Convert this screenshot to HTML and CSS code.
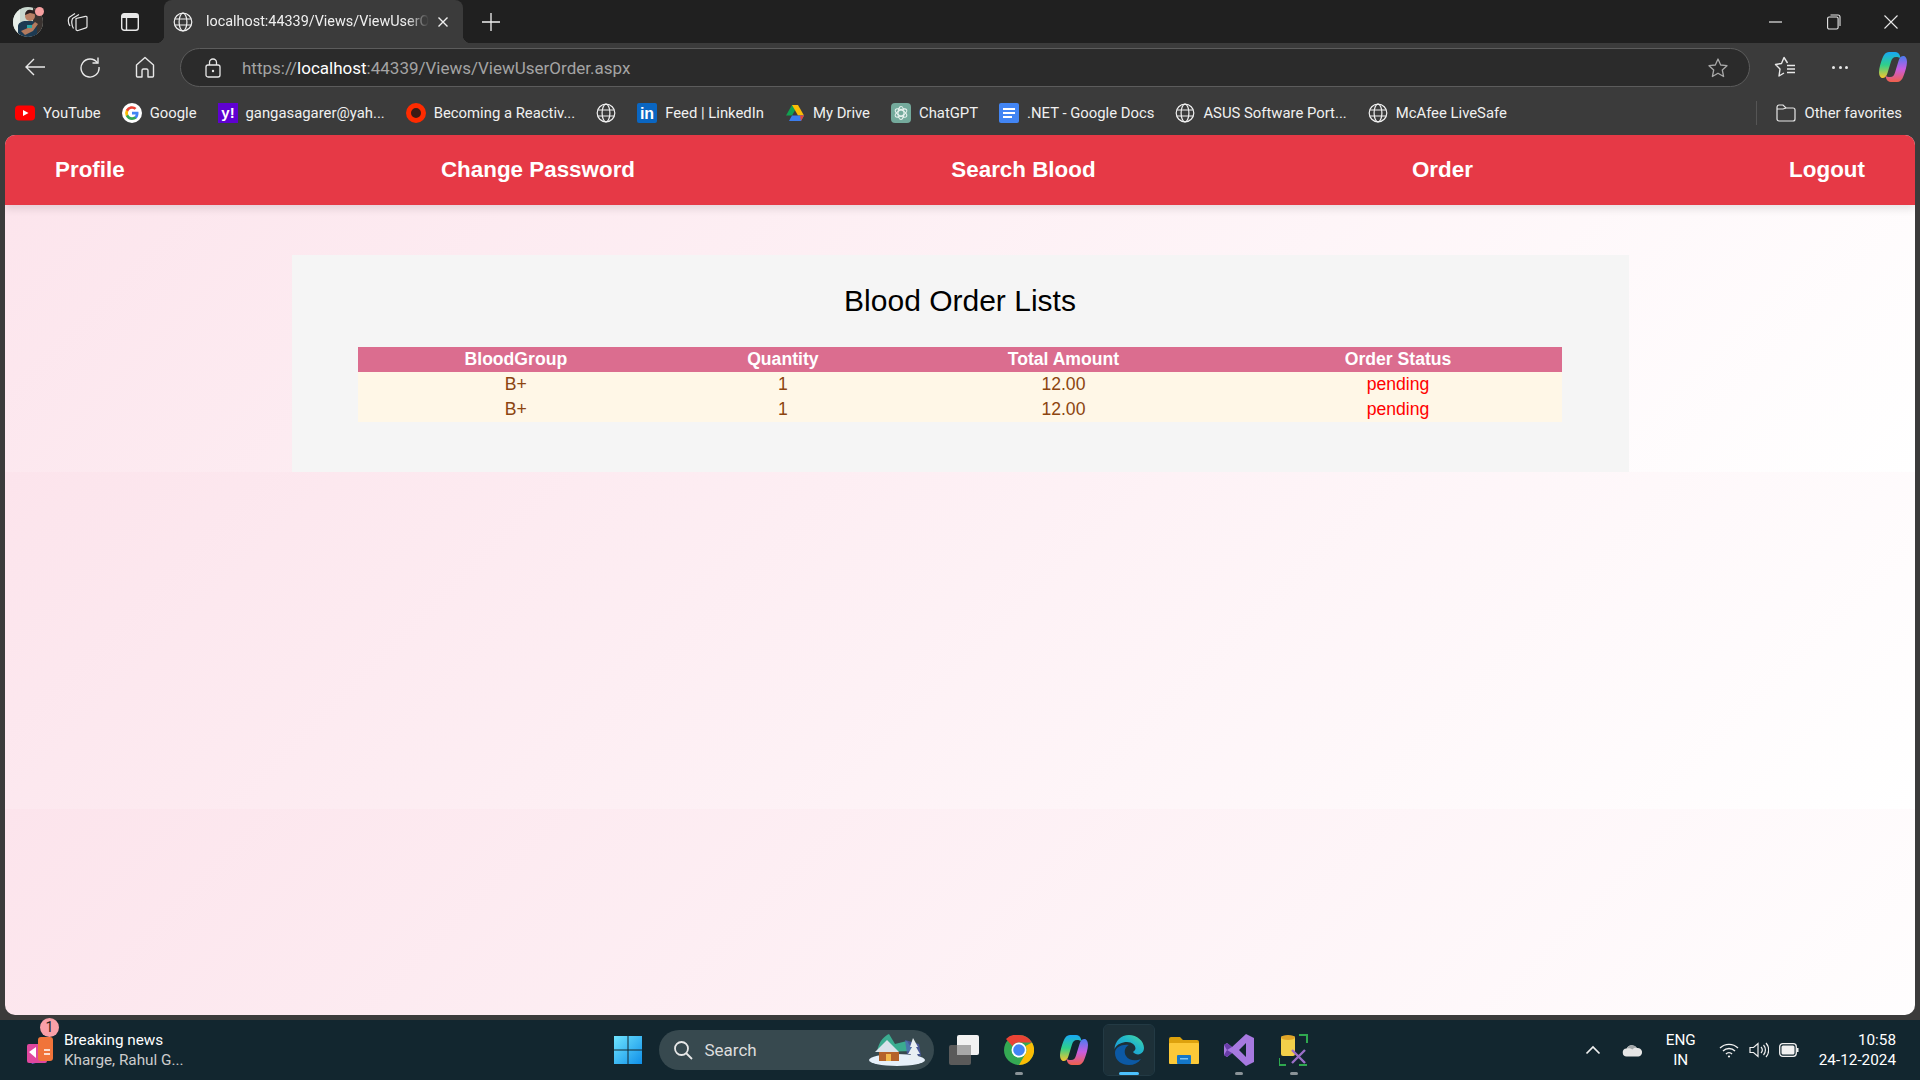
FILE: index.html
```html
<!DOCTYPE html>
<html lang="en">
<head>
    <meta charset="UTF-8">
    <meta name="viewport" content="width=device-width, initial-scale=1.0">
    <title>Blood Order Lists</title>
    <link rel="stylesheet" href="styles.css">
</head>
<body>
    <svg class="defs" width="0" height="0">
        <symbol id="globe" viewBox="0 0 20 20">
            <g fill="none" stroke="#f0f0f0" stroke-width="1.2">
                <circle cx="10" cy="10" r="8.8"/>
                <ellipse cx="10" cy="10" rx="3.9" ry="8.8"/>
                <path d="M1.8 7h16.4M1.8 13h16.4"/>
            </g>
        </symbol>
        <linearGradient id="copA" x1="0" y1="0" x2="0" y2="1">
            <stop offset="0" stop-color="#18a8f5"/>
            <stop offset=".5" stop-color="#2fd08a"/>
            <stop offset="1" stop-color="#f8c52c"/>
        </linearGradient>
        <linearGradient id="copB" x1="0" y1="0" x2="0" y2="1">
            <stop offset="0" stop-color="#4a7cf0"/>
            <stop offset=".5" stop-color="#c85ce0"/>
            <stop offset="1" stop-color="#f0604a"/>
        </linearGradient>
        <linearGradient id="edgeA" x1="0" y1="1" x2="1" y2="0">
            <stop offset="0" stop-color="#1b8fdc"/>
            <stop offset=".6" stop-color="#22b8c8"/>
            <stop offset="1" stop-color="#4bdc9a"/>
        </linearGradient>
        <symbol id="copilot" viewBox="0 0 28 32">
            <path d="M10 1h6c2.500 0 4 1.500 4.800 3.500l1 3C20.500 6.500 19 6 17 6c-3 0-4 1.500-5 4.500L8.500 22c-1 3.500-2.500 5-5 5C1.500 27 0 24.500 0 21c0-4 2-10 3.500-14C5 3 7 1 10 1z" fill="url(#copA)"/>
            <path d="M18 31h-6c-2.500 0-4-1.500-4.800-3.500l-1-3c1.300 1 2.800 1.500 4.800 1.500 3 0 4-1.500 5-4.500L19.500 10c1-3.500 2.500-5 5-5C26.500 5 28 7.500 28 11c0 4-2 10-3.500 14C23 29 21 31 18 31z" fill="url(#copB)"/>
        </symbol>
    </svg>

    <header class="titlebar">
        <svg class="avatar" viewBox="0 0 30 30" width="30" height="30">
            <clipPath id="avatarClip"><circle cx="15" cy="15" r="15"/></clipPath>
            <g clip-path="url(#avatarClip)">
                <rect width="30" height="30" fill="#c9d8cf"/>
                <rect x="20" width="10" height="30" fill="#3a3330"/>
                <rect width="7" height="30" fill="#e8efe9"/>
                <path d="M5 30V19c0-3 4-5 8-5h6c3 0 5 4 5 8v8z" fill="#1d3a52"/>
                <circle cx="17" cy="9" r="5" fill="#b98064"/>
                <path d="M12 8c0-4 3-6 6-5 3 0 4 2 4 4l-5-1z" fill="#2a2020"/>
                <path d="M8 24l9-4 5-5 3 2-5 7-8 4z" fill="#b27a5e"/>
                <rect x="14" y="18" width="5" height="3" fill="#2aa5a5"/>
            </g>
        </svg>
        <span class="avatar-dot"></span>
        <svg class="icon collections" viewBox="0 0 21 20" width="21" height="20">
            <g fill="none" stroke="#e8e8e8" stroke-width="1.200" stroke-linejoin="round">
                <path d="M3 14C1 11 1 8 2 5.500L8 1.500"/>
                <path d="M6.500 16.500C4.500 13 4.500 9 5.500 6.500L12 2.500"/>
                <path d="M9 6.500l9.500-2.200c1-.2 1.500.3 1.500 1v9.200c0 .7-.4 1.200-1 1.400L11 18.500c-1 .3-2-.3-2-1.300z"/>
            </g>
        </svg>
        <svg class="icon panel" viewBox="0 0 18 18" width="18" height="18">
            <rect x=".7" y=".7" width="16.600" height="16.600" rx="2.500" fill="none" stroke="#e8e8e8" stroke-width="1.400"/>
            <path d="M1 1h16v4H1z" fill="#e8e8e8"/>
            <path d="M5.500 5v12.500" stroke="#e8e8e8" stroke-width="1.400"/>
        </svg>
        <div class="tab">
            <svg class="icon" width="20" height="20"><use href="#globe"/></svg>
            <span class="tab-title">localhost:44339/Views/ViewUserOrder.aspx</span>
            <svg class="icon" viewBox="0 0 14 14" width="14" height="14">
                <path d="M2.500 2.500l9 9M11.500 2.500l-9 9" stroke="#f0f0f0" stroke-width="1.400"/>
            </svg>
        </div>
        <svg class="icon newtab" viewBox="0 0 18 18" width="18" height="18">
            <path d="M9 0v18M0 9h18" stroke="#f0f0f0" stroke-width="1.300"/>
        </svg>
        <div class="window-controls">
            <button class="win-btn"><svg viewBox="0 0 14 14" width="14" height="14"><path d="M0 7h13" stroke="#e8e8e8" stroke-width="1.200"/></svg></button>
            <button class="win-btn">
                <svg viewBox="0 0 14 16" width="14" height="16" fill="none" stroke="#e8e8e8" stroke-width="1.100">
                    <rect x=".6" y="3" width="10.500" height="12" rx="1.500"/>
                    <path d="M3.500 1h7.500c1.200 0 2 .8 2 2v9"/>
                </svg>
            </button>
            <button class="win-btn"><svg viewBox="0 0 14 14" width="14" height="14"><path d="M.5.500l13 13M13.500.500l-13 13" stroke="#e8e8e8" stroke-width="1.100"/></svg></button>
        </div>
    </header>

    <div class="toolbar">
        <button class="tool-btn">
            <svg viewBox="0 0 22 20" width="22" height="20" fill="none" stroke="#e8e8e8" stroke-width="1.400">
                <path d="M21 10H2M10 2l-8 8 8 8"/>
            </svg>
        </button>
        <button class="tool-btn">
            <svg viewBox="0 0 22 22" width="22" height="22" fill="none" stroke="#e8e8e8" stroke-width="1.400">
                <path d="M18.500 7A9 9 0 1 0 20 11"/>
                <path d="M19 1.500V7h-5.500"/>
            </svg>
        </button>
        <button class="tool-btn">
            <svg viewBox="0 0 20 22" width="20" height="22" fill="none" stroke="#e8e8e8" stroke-width="1.400" stroke-linejoin="round">
                <path d="M10 1.500L1.500 9v11a1 1 0 0 0 1 1H7v-6.500c0-1 .8-1.500 1.500-1.500h3c.7 0 1.500.5 1.500 1.500V21h4.500a1 1 0 0 0 1-1V9z"/>
            </svg>
        </button>
        <div class="address">
            <svg class="icon lock" viewBox="0 0 16 20" width="16" height="20" fill="none" stroke="#e8e8e8" stroke-width="1.300">
                <rect x="1" y="7" width="14" height="12" rx="2"/>
                <path d="M4.500 7V4.500a3.500 3.500 0 0 1 7 0V7"/>
                <circle cx="8" cy="13" r="1.200" fill="#e8e8e8" stroke="none"/>
            </svg>
            <span class="url">https://<b class="url-host">localhost</b>:44339/Views/ViewUserOrder.aspx</span>
            <svg class="icon star" viewBox="0 0 22 22" width="22" height="22">
                <path d="M11 2l2.700 6 6.300.7-4.700 4.300 1.300 6.500L11 16.200 5.400 19.500 6.700 13 2 8.700 8.300 8z" fill="none" stroke="#a8a8a8" stroke-width="1.300" stroke-linejoin="round"/>
            </svg>
        </div>
        <button class="tool-btn">
            <svg viewBox="0 0 22 22" width="22" height="22" fill="none" stroke="#e8e8e8" stroke-width="1.400" stroke-linejoin="round">
                <path d="M13.500 7L10 1.500 7.500 7.500 1.500 8.500 6 13 5 20l5-3"/>
                <path d="M13 9.500h8M13 13h8M13 16.500h8"/>
            </svg>
        </button>
        <button class="tool-btn">
            <span class="dots"><i></i><i></i><i></i></span>
        </button>
        <svg class="copilot-top" width="28" height="32"><use href="#copilot"/></svg>
    </div>

    <div class="bookmarks">
        <a class="bm">
            <svg viewBox="0 0 20 20" width="20" height="20">
                <rect y="2.500" width="20" height="15" rx="4" fill="#f00"/>
                <path d="M8 7l5.500 3L8 13z" fill="#fff"/>
            </svg>
            YouTube
        </a>
        <a class="bm">
            <svg viewBox="0 0 20 20" width="20" height="20">
                <circle cx="10" cy="10" r="10" fill="#fff"/>
                <path d="M16.500 10.200c0-.5 0-1-.1-1.500H10v2.900h3.700a3.200 3.200 0 0 1-1.400 2.100v1.700h2.200c1.300-1.200 2-3 2-5.200z" fill="#4285f4"/>
                <path d="M10 17c1.900 0 3.400-.6 4.500-1.700l-2.200-1.700c-.6.400-1.400.7-2.300.7-1.800 0-3.300-1.200-3.800-2.800H3.900v1.800A7 7 0 0 0 10 17z" fill="#34a853"/>
                <path d="M6.200 11.500a4.200 4.200 0 0 1 0-2.900V6.800H3.900a7 7 0 0 0 0 6.400z" fill="#fbbc05"/>
                <path d="M10 5.800c1 0 1.900.4 2.600 1l1.900-1.900A7 7 0 0 0 3.900 6.800l2.300 1.800C6.700 7 8.200 5.800 10 5.800z" fill="#ea4335"/>
            </svg>
            Google
        </a>
        <a class="bm">
            <svg viewBox="0 0 20 20" width="20" height="20">
                <rect width="20" height="20" fill="#5f01d1"/>
                <text x="10" y="15" class="yahoo-mark">y!</text>
            </svg>
            gangasagarer@yah...
        </a>
        <a class="bm">
            <svg viewBox="0 0 20 20" width="20" height="20">
                <circle cx="10" cy="10" r="7.500" fill="#3b1a14" stroke="#ff2b00" stroke-width="5"/>
            </svg>
            Becoming a Reactiv...
        </a>
        <a class="bm"><svg width="20" height="20"><use href="#globe"/></svg></a>
        <a class="bm">
            <svg viewBox="0 0 20 20" width="20" height="20">
                <rect width="20" height="20" rx="2" fill="#0a66c2"/>
                <text x="10" y="16" class="linkedin-mark">in</text>
            </svg>
            Feed | LinkedIn
        </a>
        <a class="bm">
            <svg viewBox="0 0 20 20" width="20" height="20">
                <path d="M7 2h6l-6 10.500H1z" fill="#12a150"/>
                <path d="M13 2l6 10.500h-6L7 2z" fill="#fbbc04"/>
                <path d="M4 18l3-5.500h12L16 18z" fill="#3b7ded"/>
                <path d="M16 18l3-5.500h-4z" fill="#ea4335"/>
            </svg>
            My Drive
        </a>
        <a class="bm">
            <svg viewBox="0 0 20 20" width="20" height="20">
                <rect width="20" height="20" rx="4" fill="#74aa9c"/>
                <g fill="none" stroke="#e8f2ef" stroke-width="1.100">
                    <ellipse cx="10" cy="10" rx="3" ry="6.500"/>
                    <ellipse cx="10" cy="10" rx="3" ry="6.500" transform="rotate(60 10 10)"/>
                    <ellipse cx="10" cy="10" rx="3" ry="6.500" transform="rotate(120 10 10)"/>
                </g>
            </svg>
            ChatGPT
        </a>
        <a class="bm">
            <svg viewBox="0 0 20 20" width="20" height="20">
                <rect width="20" height="20" rx="2" fill="#4285f4"/>
                <path d="M4 5h12v2H4zM4 9h12v2H4zM4 13h9v2H4z" fill="#fff"/>
            </svg>
            .NET - Google Docs
        </a>
        <a class="bm"><svg width="20" height="20"><use href="#globe"/></svg>ASUS Software Port...</a>
        <a class="bm"><svg width="20" height="20"><use href="#globe"/></svg>McAfee LiveSafe</a>
        <a class="bm bm-other">
            <svg viewBox="0 0 20 18" width="20" height="18" fill="none" stroke="#e8e8e8" stroke-width="1.200">
                <path d="M1 3.500C1 2 2 1 3 1h4l3 3h7c1.200 0 2 1 2 2v9c0 1.200-.8 2-2 2H3c-1.200 0-2-.8-2-2z"/>
                <path d="M1 5h6l3-1"/>
            </svg>
            Other favorites
        </a>
    </div>

    <div class="viewport">
        <nav class="navbar">
            <a href="#">Profile</a>
            <a href="#">Change Password</a>
            <a href="#">Search Blood</a>
            <a href="#">Order</a>
            <a href="#">Logout</a>
        </nav>
        <div class="container">
            <h2>Blood Order Lists</h2>
            <table class="grid">
                <thead>
                    <tr>
                        <th>BloodGroup</th>
                        <th>Quantity</th>
                        <th>Total Amount</th>
                        <th>Order Status</th>
                    </tr>
                </thead>
                <tbody>
                    <tr>
                        <td>B+</td>
                        <td>1</td>
                        <td>12.00</td>
                        <td class="pending">pending</td>
                    </tr>
                    <tr>
                        <td>B+</td>
                        <td>1</td>
                        <td>12.00</td>
                        <td class="pending">pending</td>
                    </tr>
                </tbody>
            </table>
        </div>
    </div>

    <footer class="taskbar">
        <div class="news">
            <svg viewBox="0 0 29 30" width="29" height="30">
                <path d="M3 22l19 3-15 4z" fill="#7a4fd0"/>
                <rect x="2" y="9" width="20" height="19" rx="2" fill="#e0479e"/>
                <rect x="13" y="2" width="15" height="24" rx="3" fill="#f0743a"/>
                <path d="M4 17l7-5v11z" fill="#fff"/>
                <path d="M19 15h6M19 19h6" stroke="#fff" stroke-width="1.500"/>
            </svg>
            <span class="news-badge">1</span>
            <div class="news-text">
                <span class="news-title">Breaking news</span>
                <span class="news-sub">Kharge, Rahul G...</span>
            </div>
        </div>

        <div class="tasks">
            <div class="task">
                <svg viewBox="0 0 30 30" width="30" height="30">
                    <defs>
                        <linearGradient id="winG" x1="0" y1="0" x2="1" y2="1">
                            <stop offset="0" stop-color="#6fe4ff"/>
                            <stop offset="1" stop-color="#0f8fe8"/>
                        </linearGradient>
                    </defs>
                    <path d="M1 1h13.500v13.500H1zM15.500 1H29v13.500H15.500zM1 15.500h13.500V29H1zM15.500 15.500H29V29H15.500z" fill="url(#winG)"/>
                </svg>
            </div>
            <div class="searchbox">
                <svg viewBox="0 0 20 20" width="20" height="20" fill="none" stroke="#e8e8e8" stroke-width="1.800">
                    <circle cx="8.500" cy="8.500" r="6.500"/>
                    <path d="M13 13l6 6"/>
                </svg>
                <span>Search</span>
                <svg class="scene" viewBox="0 0 56 32" width="56" height="32">
                    <ellipse cx="28" cy="26" rx="28" ry="6" fill="#e6f0fa"/>
                    <path d="M8 18C10 6 16 2 20 0l6 10 12-3 6 10z" fill="#3cc6a0" opacity=".8"/>
                    <path d="M36 6l14 4 2 12-14-2z" fill="#5060b8" opacity=".7"/>
                    <path d="M6 18L18 6l12 12z" fill="#d8e2ea"/>
                    <rect x="10" y="18" width="20" height="9" fill="#b5622a"/>
                    <rect x="17" y="20" width="5" height="7" fill="#f2b84a"/>
                    <path d="M44 4l5 9h-2l4 7h-3l3 6H39l3-6h-3l4-7h-2z" fill="#e8eef2"/>
                </svg>
            </div>
            <div class="task">
                <svg viewBox="0 0 30 30" width="30" height="30">
                    <rect x="0" y="10" width="22" height="20" rx="2" fill="#5a5a5a"/>
                    <rect x="8" y="0" width="22" height="20" rx="2" fill="#f2f2f2"/>
                    <rect x="8" y="10" width="14" height="10" fill="#a8a8a8"/>
                </svg>
            </div>
            <div class="task task-open">
                <svg viewBox="0 0 30 30" width="30" height="30">
                    <circle cx="15" cy="15" r="15" fill="#34a853"/>
                    <path d="M15 0a15 15 0 0 1 13 7.500H15a7.500 7.500 0 0 0-6.500 3.750L2 3.900A15 15 0 0 1 15 0z" fill="#ea4335"/>
                    <path d="M28 7.500A15 15 0 0 1 15 30l6.500-11.250A7.500 7.500 0 0 0 21.500 11z" fill="#fbbc05"/>
                    <circle cx="15" cy="15" r="7.500" fill="#fff"/>
                    <circle cx="15" cy="15" r="5.800" fill="#4285f4"/>
                </svg>
            </div>
            <div class="task"><svg width="28" height="32"><use href="#copilot"/></svg></div>
            <div class="task task-active">
                <svg viewBox="0 0 30 30" width="30" height="30">
                    <path d="M1 18C1 26 8 30 15 30 20 30 24 28 27 24 22 26 15 26 12 21 9 16 12 11 15 10 8 9 1 12 1 18z" fill="#0c59a4"/>
                    <path d="M15 0C7 0 1 6 .5 14 3 9 8 7 13 7c5 0 8.500 3 8.500 6.500 0 1.500-1.500 2.500-2.500 3.500 1.500 2 5 3 7 2 2.500-1 4-3 4-6C30 6 23 0 15 0z" fill="url(#edgeA)"/>
                </svg>
            </div>
            <div class="task">
                <svg viewBox="0 0 30 28" width="30" height="28">
                    <path d="M0 3a2 2 0 0 1 2-2h9l3 3h14a2 2 0 0 1 2 2v4H0z" fill="#dda20d"/>
                    <rect y="7" width="30" height="21" rx="1" fill="#fcc938"/>
                    <rect x="8" y="19" width="14" height="9" rx="1" fill="#1477c9"/>
                    <rect x="11" y="22" width="8" height="1.500" fill="#7fc4f2"/>
                </svg>
            </div>
            <div class="task task-open">
                <svg viewBox="0 0 30 32" width="30" height="32">
                    <path d="M22 0l8 4v24l-8 4L8 19l-5 4-3-2V11l3-2 5 4zM22 9l-7 7 7 7z" fill="#a779e0"/>
                    <path d="M0 11l3-2 5 4-5 3zM0 21l3 2 5-4-5-3z" fill="#6a3eaa"/>
                </svg>
            </div>
            <div class="task task-open">
                <svg viewBox="0 0 30 32" width="30" height="32">
                    <rect x="2" y="2" width="14" height="20" rx="2" fill="#f2d04a"/>
                    <ellipse cx="9" cy="3.500" rx="7" ry="2.500" fill="#e0a528"/>
                    <path d="M20 1h8v8M0 24v7h7M20 31h8" fill="none" stroke="#2fa84f" stroke-width="2"/>
                    <path d="M13 29l13-13M13 16l13 13" stroke="#9b6fc8" stroke-width="2.400"/>
                </svg>
            </div>
        </div>

        <div class="tray">
            <svg viewBox="0 0 16 10" width="16" height="10" fill="none" stroke="#f0f0f0" stroke-width="1.700">
                <path d="M1.500 8.500L8 2l6.500 6.500"/>
            </svg>
            <svg class="tray-cloud" viewBox="0 0 21 13" width="21" height="13">
                <path d="M5 12.500a4 4 0 0 1-.5-8A6 6 0 0 1 15 4a4.300 4.300 0 0 1 1.500 8.500z" fill="#e6e6e6"/>
                <path d="M4.500 4.500A6 6 0 0 1 15 4c-2-.5-3.500 0-4.500 1.500-2-1.500-4-1.500-6-1z" fill="#a4a8aa"/>
            </svg>
            <div class="lang"><span>ENG</span><span>IN</span></div>
            <svg class="tray-icon" viewBox="0 0 20 16" width="20" height="16" fill="none" stroke="#f0f0f0" stroke-width="1.400">
                <path d="M1 6a13 13 0 0 1 18 0M4 9a8.500 8.500 0 0 1 12 0M7 12a4 4 0 0 1 6 0"/>
                <circle cx="10" cy="14.500" r="1.100" fill="#f0f0f0" stroke="none"/>
            </svg>
            <svg class="tray-icon" viewBox="0 0 20 16" width="20" height="16" fill="none" stroke="#f0f0f0" stroke-width="1.200">
                <path d="M1 5.500h3.500L9 1.500v13l-4.500-4H1z"/>
                <path d="M12 5a4.500 4.500 0 0 1 0 6M14.500 3a7.500 7.500 0 0 1 0 10M17 1a10.500 10.500 0 0 1 0 14"/>
            </svg>
            <svg viewBox="0 0 20 14" width="20" height="14">
                <rect x=".7" y=".7" width="16.600" height="12.600" rx="3" fill="none" stroke="#f0f0f0" stroke-width="1.300"/>
                <rect x="2.500" y="2.500" width="13" height="9" rx="1.500" fill="#f0f0f0"/>
                <rect x="18" y="5" width="1.500" height="4" fill="#f0f0f0"/>
            </svg>
            <div class="clock"><span>10:58</span><span>24-12-2024</span></div>
        </div>
    </footer>
</body>
</html>
```

FILE: styles.css
```css
* { box-sizing: border-box; }
html, body { height: 100%; }
body { margin: 0; display: flex; flex-direction: column; height: 1080px; overflow: hidden; background-color: #3b3b3b; font-family: "Liberation Sans", Arial, sans-serif; }
svg { display: block; flex: none; }
button { background: none; border: none; padding: 0; display: flex; align-items: center; justify-content: center; }
.defs { position: absolute; }

/* browser chrome */
.titlebar { position: relative; display: flex; align-items: center; height: 43px; flex: none; padding-left: 13px; background-color: #202020; }
.avatar-dot { position: absolute; left: 35px; top: 7px; width: 9px; height: 9px; border-radius: 50%; background-color: #f6a0a0; }
.collections { margin-left: 24px; }
.panel { margin-left: 33px; }
.tab { position: relative; display: flex; align-items: center; align-self: stretch; width: 299px; margin-left: 25px; margin-top: 0; padding-left: 9px; border-radius: 8px 8px 0 0; background-color: #3b3b3b; }
.tab::before, .tab::after { content: ""; position: absolute; bottom: 0; width: 8px; height: 8px; }
.tab::before { left: -8px; background: radial-gradient(circle at 0 0, #202020 8px, #3b3b3b 8.5px); }
.tab::after { right: -8px; background: radial-gradient(circle at 100% 0, #202020 8px, #3b3b3b 8.5px); }
.tab-title { width: 223px; margin: 0 7px 0 13px; white-space: nowrap; overflow: hidden; font: 14.4px Roboto, sans-serif; color: #f0f0f0; -webkit-mask-image: linear-gradient(to right, #000 90%, transparent); mask-image: linear-gradient(to right, #000 90%, transparent); }
.newtab { margin-left: 19px; }
.window-controls { display: flex; margin-left: auto; }
.win-btn { width: 57.5px; height: 43px; }

.toolbar { display: flex; align-items: center; gap: 15px; height: 48px; flex: none; padding: 0 13px 0 15px; background-color: #3b3b3b; }
.tool-btn { width: 40px; height: 38px; }
.address { display: flex; align-items: center; flex: 1; height: 39px; margin-top: 1px; padding: 0 20px 0 24px; border: 1.500px solid #5c5c5c; border-radius: 20px; background-color: #2b2b2b; }
.url { margin-left: 21px; font: 17px Roboto, sans-serif; color: #a4a4a4; white-space: nowrap; }
.url-host { font-weight: 400; color: #fff; }
.star { margin-left: auto; }
.dots { display: flex; gap: 3.500px; }
.dots i { width: 3px; height: 3px; border-radius: 50%; background-color: #e8e8e8; }
.copilot-top { margin-left: 4px; }

.bookmarks { display: flex; align-items: center; gap: 21px; height: 44px; flex: none; padding: 0 18px 0 15px; background-color: #3b3b3b; }
.bm { display: flex; align-items: center; gap: 8px; font: 14.85px Roboto, sans-serif; color: #f0f0f0; white-space: nowrap; }
.bm-other { margin-left: auto; padding-left: 19px; height: 24px; border-left: 1px solid #555; }
.yahoo-mark { font: bold 15px "Liberation Sans", sans-serif; fill: #fff; text-anchor: middle; }
.linkedin-mark { font: bold 16px "Liberation Sans", sans-serif; fill: #fff; text-anchor: middle; }

/* the page itself */
.viewport { flex: none; height: 880px; margin: 0 5px; border-radius: 10px; overflow: hidden; background: linear-gradient(135deg, #fce4ec, #fff); background-size: 100% 337px; }
.navbar { display: flex; justify-content: space-between; align-items: center; height: 70px; padding: 0 50px; background-color: #e63946; box-shadow: 0 4px 8px rgba(0,0,0,0.1); }
.navbar a { font-size: 22.4px; font-weight: bold; color: #fff; text-decoration: none; }
.container { width: 70%; height: 217px; margin: 50px auto 0; padding-top: 29px; background-color: #f5f5f5; }
.container h2 { margin: 0 0 29px; font-size: 30px; font-weight: normal; line-height: 34px; text-align: center; color: #000; }
.grid { width: 90%; margin: 0 auto; border-collapse: collapse; font-size: 17.6px; }
.grid th { height: 25px; padding: 0; background-color: #db6d8f; color: #fff; font-weight: bold; }
.grid td { height: 25px; padding: 0; background-color: #fff7e7; color: #8c4510; text-align: center; }
.grid td.pending { color: #f00; }

/* windows taskbar */
.taskbar { display: grid; grid-template-columns: 1fr auto 1fr; align-items: center; height: 60px; flex: none; margin-top: 5px; background-color: #12262f; color: #fff; font-family: Roboto, sans-serif; }
.news { position: relative; display: flex; align-items: center; padding-left: 25px; }
.news-badge { position: absolute; left: 40px; top: -12px; width: 19px; height: 19px; border-radius: 50%; background-color: #f9a0a8; color: #222; font-size: 14px; line-height: 19px; text-align: center; }
.news-text { display: flex; flex-direction: column; margin-left: 10px; font-size: 15.3px; line-height: 20px; }
.news-sub { color: #ccc; }
.tasks { display: flex; align-items: center; gap: 5px; padding-left: 1px; }
.task { position: relative; display: flex; align-items: center; justify-content: center; width: 50px; height: 50px; }
.task-open::after, .task-active::after { content: ""; position: absolute; bottom: 0; left: 50%; width: 8px; height: 3px; margin-left: -4px; border-radius: 2px; background-color: #8a9398; }
.task-active { border-radius: 5px; background-color: #1d3038; outline: 1px solid #233a44; }
.task-active::after { width: 20px; margin-left: -10px; background-color: #4cc2ff; }
.searchbox { display: flex; align-items: center; width: 275px; height: 40px; margin: 0 0 0 1px; padding: 0 9px 0 14px; border-radius: 20px; background-color: #37494f; color: #ddd; font-size: 17px; }
.searchbox span { margin-left: 12px; }
.scene { margin-left: auto; }
.tray { display: flex; align-items: center; justify-content: flex-end; padding-right: 24px; font-size: 15.3px; }
.tray-cloud { margin-left: 21px; }
.lang { display: flex; flex-direction: column; align-items: center; margin: 0 23px; line-height: 20px; }
.tray-icon { margin-right: 10px; }
.clock { display: flex; flex-direction: column; align-items: flex-end; margin-left: 20px; line-height: 20px; }
```
